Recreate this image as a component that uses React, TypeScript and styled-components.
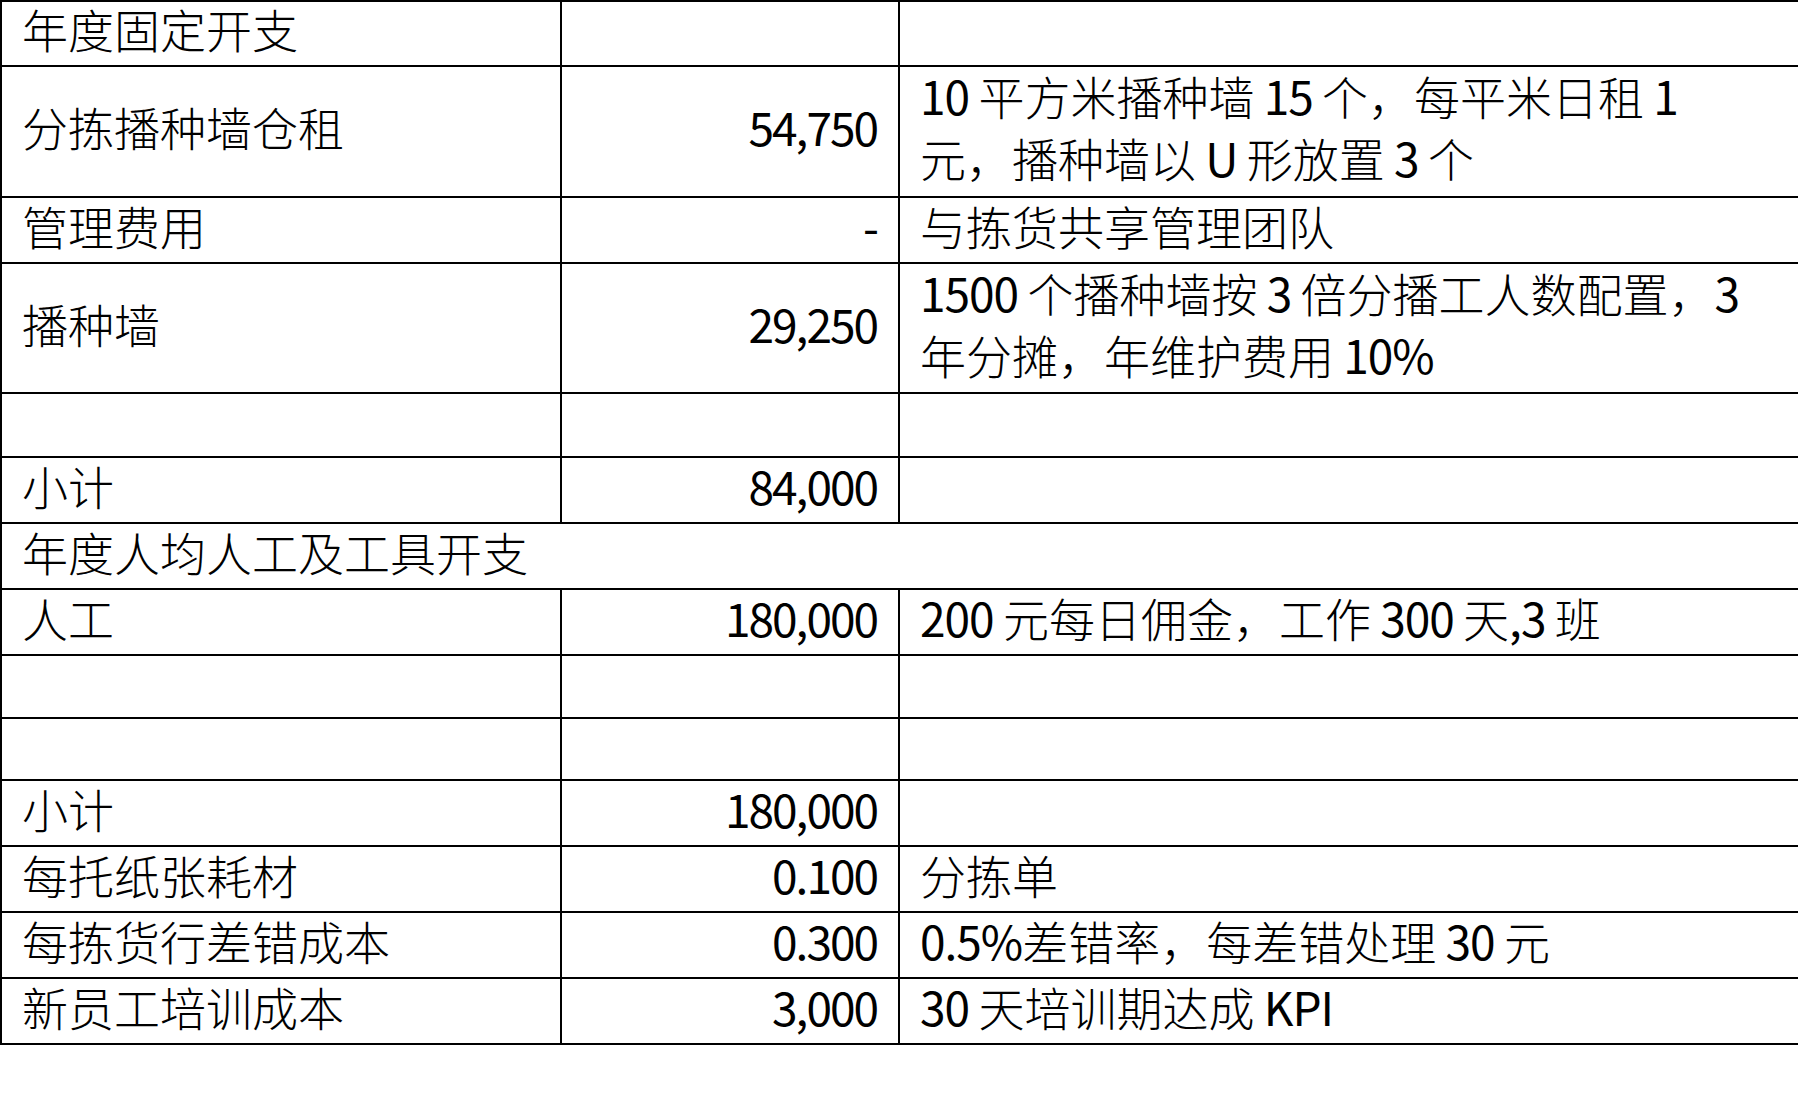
import React from "react";
import styled, { createGlobalStyle } from "styled-components";

const GlobalStyle = createGlobalStyle`
  html, body {
    margin: 0;
    padding: 0;
    background: #ffffff;
  }
  body {
    font-family: "Noto Sans CJK SC", "Noto Sans", sans-serif;
    color: #000000;
  }
`;

const Sheet = styled.div`
  display: flex;
  flex-direction: column;
  width: 1798px;
  border-top: 2px solid #000;
  border-left: 2px solid #000;
  box-sizing: border-box;
`;

const Row = styled.div<{ $h: number }>`
  display: grid;
  grid-template-columns: 560px 338px 1fr;
  grid-template-rows: 100%;
  height: ${(p) => p.$h}px;
  min-height: 0;
  flex-shrink: 0;
`;

const Cell = styled.div<{ $right?: boolean; $span?: boolean }>`
  display: flex;
  align-items: center;
  justify-content: ${(p) => (p.$right ? "flex-end" : "flex-start")};
  grid-column: ${(p) => (p.$span ? "1 / -1" : "auto")};
  min-height: 0;
  padding: 0 21px 2px 20px;
  border-bottom: 2px solid #000;
  border-right: 2px solid #000;
  box-sizing: border-box;

  &:last-child {
    border-right: none;
  }
`;

const Text = styled.span`
  display: block;
  margin-top: -9px;
  font-size: 46px;
  line-height: 48px;
  font-weight: 300;
  white-space: nowrap;
`;

const NoteLine = styled.span`
  display: block;
  line-height: 62px;
  &:only-child {
    line-height: 48px;
  }
`;

// ascii runs (digits, KPI, U ...) are set a bit heavier, like the sheet's latin face
const Latin = styled.span<{ $spacing: number }>`
  font-weight: 400;
  letter-spacing: ${(p) => p.$spacing}px;
`;

function mixed(s: string, spacing: number) {
  return s.split(/([ -~]+)/).map((part, i) =>
    /^[ -~]+$/.test(part) ? (
      <Latin key={i} $spacing={spacing}>
        {part}
      </Latin>
    ) : (
      part
    )
  );
}

type Line = {
  h: number;
  label?: string;
  value?: string;
  note?: string[];
  section?: boolean;
};

const rows: Line[] = [
  { h: 65, label: "年度固定开支" },
  {
    h: 131,
    label: "分拣播种墙仓租",
    value: "54,750",
    note: ["10 平方米播种墙 15 个，每平米日租 1", "元，播种墙以 U 形放置 3 个"],
  },
  { h: 66, label: "管理费用", value: "-", note: ["与拣货共享管理团队"] },
  {
    h: 130,
    label: "播种墙",
    value: "29,250",
    note: ["1500 个播种墙按 3 倍分播工人数配置，3", "年分摊，年维护费用 10%"],
  },
  { h: 64 },
  { h: 66, label: "小计", value: "84,000" },
  { h: 66, label: "年度人均人工及工具开支", section: true },
  { h: 66, label: "人工", value: "180,000", note: ["200 元每日佣金，工作 300 天,3 班"] },
  { h: 63 },
  { h: 62 },
  { h: 66, label: "小计", value: "180,000" },
  { h: 66, label: "每托纸张耗材", value: "0.100", note: ["分拣单"] },
  { h: 66, label: "每拣货行差错成本", value: "0.300", note: ["0.5%差错率，每差错处理 30 元"] },
  { h: 66, label: "新员工培训成本", value: "3,000", note: ["30 天培训期达成 KPI"] },
];

function App() {
  return (
    <>
      <GlobalStyle />
      <Sheet>
        {rows.map((r, i) =>
          r.section ? (
            <Row key={i} $h={r.h}>
              <Cell $span>
                <Text>{r.label}</Text>
              </Cell>
            </Row>
          ) : (
            <Row key={i} $h={r.h}>
              <Cell>
                <Text>{r.label}</Text>
              </Cell>
              <Cell $right>
                <Text>{r.value && mixed(r.value, -2)}</Text>
              </Cell>
              <Cell>
                <Text>
                  {r.note?.map((t, j) => (
                    <NoteLine key={j}>{mixed(t, -1)}</NoteLine>
                  ))}
                </Text>
              </Cell>
            </Row>
          )
        )}
      </Sheet>
    </>
  );
}

export default App;
